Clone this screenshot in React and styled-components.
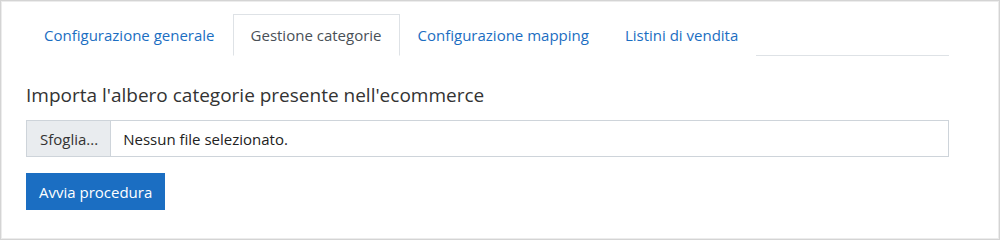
import React, { useState } from "react";
import styled, { createGlobalStyle } from "styled-components";

const GlobalStyle = createGlobalStyle`
  html, body {
    margin: 0;
    padding: 0;
    background: #fff;
  }
  body {
    font-family: "Open Sans", "Noto Sans", "Liberation Sans", sans-serif;
    color: #212529;
  }
`;

const tabs = [
    "Configurazione generale",
    "Gestione categorie",
    "Configurazione mapping",
    "Listini di vendita",
];

function App() {
    const [active, setActive] = useState(1);

    return (
        <>
            <GlobalStyle />
            <Frame>
                <TabBar>
                    {tabs.map((label, index) => (
                        <Tab key={label} $active={index === active} onClick={() => setActive(index)}>
                            {label}
                        </Tab>
                    ))}
                </TabBar>
                <Panel>
                    <Title>Importa l'albero categorie presente nell'ecommerce</Title>
                    <FileField>
                        <BrowseButton>Sfoglia...</BrowseButton>
                        <FileName>Nessun file selezionato.</FileName>
                    </FileField>
                    <PrimaryButton>Avvia procedura</PrimaryButton>
                </Panel>
            </Frame>
        </>
    );
}
export default App;

const Frame = styled.div`
    box-sizing: border-box;
    width: 1000px;
    height: 240px;
    border: 1px solid #d4d4d4;
    box-shadow: inset 0 0 0 1px #ececec;
    padding: 13px 50px 0 25px;
`
const TabBar = styled.div`
    display: flex;
    border-bottom: 1px solid #dee2e6;
`
const Tab = styled.div`
    box-sizing: border-box;
    height: 42px;
    padding: 0 17px;
    display: flex;
    align-items: center;
    font-size: 15px;
    margin-bottom: -1px;
    cursor: pointer;
    color: ${(p) => (p.$active ? "#495057" : "#1b6ec2")};
    background: #fff;
    border: 1px solid ${(p) => (p.$active ? "#dee2e6" : "transparent")};
    border-bottom-color: ${(p) => (p.$active ? "#fff" : "transparent")};
`
const Panel = styled.div`
    display: flex;
    flex-direction: column;
    align-items: flex-start;
    padding-top: 26px;
`
const Title = styled.h4`
    margin: 0 0 12px;
    font-size: 19px;
    font-weight: 400;
    color: #333;
    line-height: 26px;
`
const FileField = styled.div`
    box-sizing: border-box;
    display: flex;
    width: 100%;
    height: 37px;
    border: 1px solid #ced4da;
    font-size: 15px;
`
const BrowseButton = styled.div`
    display: flex;
    align-items: center;
    padding: 0 12px 0 13px;
    background: #e9ecef;
    border-right: 1px solid #ced4da;
    color: #333;
`
const FileName = styled.div`
    display: flex;
    align-items: center;
    padding: 0 12px;
    color: #222;
`
const PrimaryButton = styled.button`
    margin-top: 16px;
    height: 37px;
    padding: 0 12px;
    border: 1px solid #1b6ec2;
    background: #1b6ec2;
    color: #fff;
    font-family: inherit;
    font-size: 15px;
    cursor: pointer;
`
